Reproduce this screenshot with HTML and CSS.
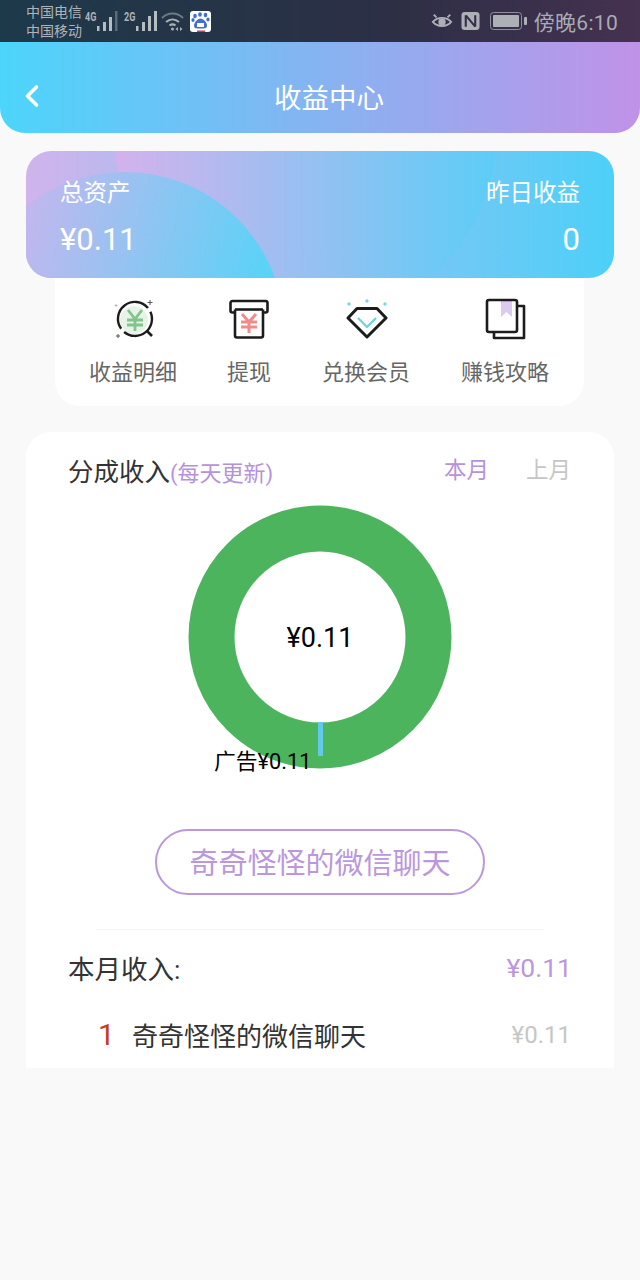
FILE: index.html
```html
<!DOCTYPE html>
<html lang="zh-CN">

<head>
    <meta charset="UTF-8">
    <meta name="viewport" content="width=device-width, initial-scale=1.0">
    <title>收益中心</title>
    <link rel="stylesheet" href="styles.css">
</head>

<body>
    <!-- 状态栏 -->
    <div class="statusBar">
        <div class="carrier">
            <span>中国电信</span>
            <span>中国移动</span>
        </div>
        <div class="signal">
            <b>4G</b>
            <svg width="22" height="22" viewBox="0 0 22 22">
                <path d="M0 16h2.500v5H0zM6 12h3v9H6zM12 7h3v14h-3z" fill="#b5bcc2" />
                <path d="M18 1h2.500v20H18z" fill="#5b6a74" />
            </svg>
        </div>
        <div class="signal">
            <b>2G</b>
            <svg width="22" height="22" viewBox="0 0 22 22">
                <path d="M0 16h2.500v5H0zM6 12h3v9H6zM12 6h3v15h-3zM18 1h3v20h-3z" fill="#b5bcc2" />
            </svg>
        </div>
        <svg class="wifi" width="24" height="22" viewBox="0 0 24 22" fill="none" stroke="#aab2b8" stroke-width="2">
            <path d="M1 8c6-6 15-6 21 0" stroke="#6f7b84" />
            <path d="M5 12c4-3.500 9-3.500 13 0" />
            <path d="M8.500 15.500c2-1.500 4-1.500 6 0" />
            <circle cx="11.500" cy="19" r="1.500" fill="#aab2b8" stroke="none" />
            <path d="M17 17l-2.500 2 2.500 2zM19 17l2.500 2-2.500 2z" fill="#aab2b8" stroke="none" />
        </svg>
        <div class="appIcon">
            <svg width="21" height="21" viewBox="0 0 21 21" fill="#3f6fd0">
                <ellipse cx="5" cy="5" rx="1.800" ry="2.300" />
                <ellipse cx="10" cy="3.500" rx="1.800" ry="2.300" />
                <ellipse cx="15.500" cy="4" rx="1.800" ry="2.300" />
                <ellipse cx="18" cy="8.500" rx="1.600" ry="2" />
                <ellipse cx="3" cy="9" rx="1.600" ry="2" />
                <path d="M10.500 7.500c3 0 6.500 4 6.500 7s-2 3-6.500 3-6.500 0-6.500-3 3.500-7 6.500-7z" />
                <rect x="7" y="12" width="7" height="4" fill="#fff" />
                <rect x="7" y="19.500" width="8" height="1.500" fill="#d8384a" />
            </svg>
        </div>
        <div class="statusRight">
            <svg width="22" height="20" viewBox="0 0 24 20" fill="none" stroke="#aeb0b8" stroke-width="2">
                <path d="M2 11c5-6 15-6 20 0-5 6-15 6-20 0z" />
                <circle cx="12" cy="11" r="3" fill="#aeb0b8" />
                <path d="M3 3l3 3M21 3l-3 3" />
            </svg>
            <svg width="19" height="20" viewBox="0 0 20 20">
                <rect x="0.500" y="0.500" width="19" height="19" rx="3.500" fill="#aeb0b8" />
                <path d="M5 4v12M15 4v12M5 4l10 12" fill="none" stroke="#2f3045" stroke-width="2.200" />
            </svg>
            <svg class="battery" width="37" height="18" viewBox="0 0 37 18">
                <rect x="0.500" y="0.500" width="31" height="17" rx="3" fill="none" stroke="#8e9099" />
                <rect x="3" y="3" width="26" height="12" rx="1" fill="#aeb0b8" />
                <rect x="34" y="5" width="3" height="8" rx="1" fill="#aeb0b8" />
            </svg>
            <span class="time">傍晚6:10</span>
        </div>
    </div>

    <!-- 标题栏 -->
    <div class="header">
        <svg class="backIcon" width="16" height="24" viewBox="0 0 16 24" fill="none" stroke="#fff" stroke-width="3.600" stroke-linecap="round" stroke-linejoin="round">
            <path d="M12.500 3L3.500 12l9 9" />
        </svg>
        <h1>收益中心</h1>
    </div>

    <!-- 资产卡片 -->
    <div class="assetCard">
        <span class="arc arcBig"></span>
        <span class="arc arcSmall"></span>
        <div class="assetCol">
            <p class="assetLabel">总资产</p>
            <p class="assetNum">¥0.11</p>
        </div>
        <div class="assetCol assetRight">
            <p class="assetLabel">昨日收益</p>
            <p class="assetNum">0</p>
        </div>
    </div>

    <!-- 四个入口 -->
    <ul class="shortcuts">
        <li>
            <svg width="44" height="44" viewBox="0 0 44 44" fill="none">
                <circle cx="23" cy="23" r="14" fill="#e6f3e6" />
                <path d="M17 13l7 9 7-9M16 23h16M16 28h16M24 22v12" stroke="#82c48c" stroke-width="2.800" />
                <path d="M37 11A17 17 0 0 0 10.100 31.750" stroke="#1c1c1c" stroke-width="2.400" />
                <path d="M13.100 35A17 17 0 0 0 39.400 14.800" stroke="#1c1c1c" stroke-width="2.400" />
                <path d="M36 34l5 5" stroke="#1c1c1c" stroke-width="2.600" />
                <path d="M39 3v5M36.500 5.500h5M7 37v4M5 39h4" stroke="#555" stroke-width="1" />
                <path d="M5 7v3M3.500 8.500h3" stroke="#bbb" stroke-width="1" />
            </svg>
            <span>收益明细</span>
        </li>
        <li>
            <svg width="44" height="44" viewBox="0 0 44 44" fill="none">
                <path d="M8 15.500H5.500A2 2 0 0 1 3.500 13.500V6A2 2 0 0 1 5.500 4h33A2 2 0 0 1 40.500 6v7.500a2 2 0 0 1-2 2H36" stroke="#1c1c1c" stroke-width="2.600" />
                <path d="M8 12.500h28" stroke="#1c1c1c" stroke-width="2.600" />
                <path d="M8 12.500V38.500a2 2 0 0 0 2 2h24a2 2 0 0 0 2-2V12.500" stroke="#1c1c1c" stroke-width="2.600" />
                <path d="M15 17l7 8 7-8M14 25h16M14 30h16M22 25v11" stroke="#f28b8b" stroke-width="3" />
            </svg>
            <span>提现</span>
        </li>
        <li>
            <svg width="44" height="44" viewBox="0 0 44 44" fill="none">
                <path d="M13 11.500h20l9 9.500-19 19L4 21z" stroke="#1c1c1c" stroke-width="3" stroke-linejoin="round" />
                <path d="M14 21l9 9 9-9" stroke="#6fd0e0" stroke-width="2.200" />
                <circle cx="5" cy="7" r="1.700" fill="#7fd4e4" />
                <circle cx="23" cy="4" r="1.700" fill="#7fd4e4" />
                <circle cx="41" cy="7" r="1.700" fill="#7fd4e4" />
            </svg>
            <span>兑换会员</span>
        </li>
        <li>
            <svg width="44" height="44" viewBox="0 0 44 44" fill="none">
                <path d="M18 4h11v16l-5.500-5-5.500 5z" fill="#dccaf1" />
                <rect x="4" y="3" width="30" height="32" rx="2" stroke="#1c1c1c" stroke-width="2.600" />
                <path d="M34 9h7v32H11v-6" stroke="#1c1c1c" stroke-width="2.600" stroke-linejoin="round" />
            </svg>
            <span>赚钱攻略</span>
        </li>
    </ul>

    <!-- 分成收入 -->
    <div class="incomeCard">
        <div class="incomeHead">
            <div class="incomeTitle">分成收入<small>(每天更新)</small></div>
            <div class="tabs">
                <span class="tabOn">本月</span>
                <span>上月</span>
            </div>
        </div>

        <div class="chart">
            <svg width="264" height="264" viewBox="0 0 264 264">
                <circle cx="132" cy="132" r="108.500" fill="none" stroke="#4db45e" stroke-width="46" />
                <rect x="130" y="217" width="5" height="34" fill="#62c8ec" />
            </svg>
            <div class="chartSum">¥0.11</div>
            <div class="chartLabel">广告¥0.11</div>
        </div>

        <div class="pillWrap">
            <div class="pill">奇奇怪怪的微信聊天</div>
        </div>

        <div class="divider"></div>

        <div class="monthRow">
            <span>本月收入:</span>
            <span class="monthNum">¥0.11</span>
        </div>
        <div class="rankRow">
            <span class="rankNo">1</span>
            <span class="rankName">奇奇怪怪的微信聊天</span>
            <span class="rankNum">¥0.11</span>
        </div>
    </div>
</body>

</html>
```

FILE: styles.css
```css
* {
    padding: 0;
    margin: 0;
    list-style: none;
    box-sizing: border-box;
}

body {
    width: 640px;
    height: 1280px;
    background-color: #f9f9f9;
    font-family: Roboto, "Noto Sans CJK SC", sans-serif;
    overflow: hidden;
}

/* 状态栏 */
.statusBar {
    display: flex;
    align-items: center;
    height: 42px;
    padding: 0 22px 0 26px;
    background: linear-gradient(90deg, #1d3a4a, #2c2f45 60%, #453150);
    color: #aeb4ba;
}

.carrier {
    display: flex;
    flex-direction: column;
    width: 58px;
    padding-top: 2px;
    font-size: 14px;
    line-height: 19px;
    margin-right: 1px;
    white-space: nowrap;
}

.signal {
    display: flex;
    align-items: flex-start;
    width: 39px;
}

.signal b {
    font-size: 12px;
    line-height: 14px;
    font-weight: 700;
    width: 12px;
    transform: scaleX(.75);
    transform-origin: left;
}

.wifi {
    margin: 0 5px 0 -2px;
}

.appIcon {
    display: flex;
    align-items: center;
    justify-content: center;
    width: 21px;
    height: 21px;
    background-color: #fff;
    border-radius: 3px;
}

.statusRight {
    display: flex;
    align-items: center;
    gap: 8px;
    margin-left: auto;
}

.battery {
    margin-left: 2px;
    margin-right: -1px;
}

.time {
    font-size: 21px;
    letter-spacing: .3px;
    color: #a9abb4;
}

/* 标题栏 */
.header {
    position: relative;
    height: 91px;
    padding-top: 16px;
    display: flex;
    align-items: center;
    justify-content: center;
    background: linear-gradient(90deg, #4cd5fb, #c092e8);
    border-radius: 0 0 25px 25px;
}

.header h1 {
    font-size: 27.500px;
    font-weight: 400;
    color: #fff;
    margin-left: 18px;
}

.backIcon {
    position: absolute;
    left: 24px;
    top: 54px;
    transform: translateY(-50%);
}

/* 资产卡片 */
.assetCard {
    position: relative;
    display: flex;
    justify-content: space-between;
    height: 127px;
    margin: 18px 26px 0;
    padding: 26px 34px 0;
    overflow: hidden;
    color: #fff;
    background: linear-gradient(90deg, #d0b4ec, #4dd0f8);
    border-radius: 25px;
}

.arc {
    position: absolute;
    border-radius: 50%;
}

.arcBig {
    left: 88px;
    top: -208px;
    width: 382px;
    height: 382px;
    background: linear-gradient(90deg, #d4b2ec, #5ccdf7);
}

.arcSmall {
    left: -60px;
    top: 21px;
    width: 318px;
    height: 318px;
    background: linear-gradient(105deg, #d4b2ec 6%, #4dd6f8 90%);
}

.assetCol {
    position: relative;
}

.assetRight {
    text-align: right;
}

.assetLabel {
    font-size: 23.500px;
    line-height: 32px;
}

.assetNum {
    font-size: 31px;
    line-height: 40px;
    margin-top: 11px;
}

/* 四个入口 */
.shortcuts {
    display: grid;
    grid-template-columns: 156px 76px 158px 120px;
    justify-content: start;
    height: 128px;
    margin: 0 56px 0 55px;
    padding-top: 19px;
    background-color: #fff;
    border-radius: 0 0 25px 25px;
}

.shortcuts li {
    display: flex;
    flex-direction: column;
    align-items: center;
    font-size: 22px;
    color: #666;
}

.shortcuts li span {
    margin-top: 16px;
    line-height: 32px;
    white-space: nowrap;
}

/* 分成收入 */
.incomeCard {
    height: 636px;
    margin: 26px 26px 0;
    padding: 0 43px;
    background-color: #fff;
    border-radius: 25px 25px 0 0;
}

.incomeHead {
    display: flex;
    justify-content: space-between;
    align-items: center;
    height: 56px;
    margin-left: -1px;
    padding-top: 19px;
}

.incomeTitle {
    font-size: 25.500px;
    color: #333;
}

.incomeTitle small {
    font-size: 22px;
    color: #b792dc;
}

.tabs {
    display: flex;
    gap: 37px;
    margin-top: -3px;
    font-size: 22.500px;
    color: #c6c6c6;
}

.tabOn {
    color: #b792dc;
}

.chart {
    position: relative;
    width: 264px;
    height: 264px;
    margin: 17px auto 0;
}

.chartSum {
    position: absolute;
    left: 0;
    right: 0;
    top: 115px;
    font-size: 27px;
    line-height: 36px;
    text-align: center;
    color: #000;
}

.chartLabel {
    position: absolute;
    left: 26px;
    top: 243px;
    font-size: 21.800px;
    line-height: 28px;
    color: #000;
    white-space: nowrap;
}

.pillWrap {
    display: flex;
    justify-content: center;
    margin-top: 60px;
}

.pill {
    width: 330px;
    height: 66px;
    line-height: 67px;
    text-align: center;
    font-size: 29px;
    color: #bb97de;
    border: 2px solid #bb97de;
    border-radius: 33px;
}

.divider {
    height: 1px;
    margin: 34px 28px 0;
    background-color: #f3f3f3;
}

.monthRow {
    display: flex;
    justify-content: space-between;
    align-items: center;
    height: 74px;
    margin: 0 -1px;
    font-size: 26.500px;
    color: #333;
}

.monthNum {
    font-size: 26.500px;
    color: #bb97de;
}

.rankRow {
    display: flex;
    align-items: center;
    height: 60px;
    padding-left: 29px;
}

.rankNo {
    width: 34px;
    font-size: 30px;
    color: #c5401a;
}

.rankName {
    font-size: 26px;
    color: #333;
}

.rankNum {
    margin: 2px 0 0 auto;
    font-size: 24px;
    color: #c6c6c6;
}
```
